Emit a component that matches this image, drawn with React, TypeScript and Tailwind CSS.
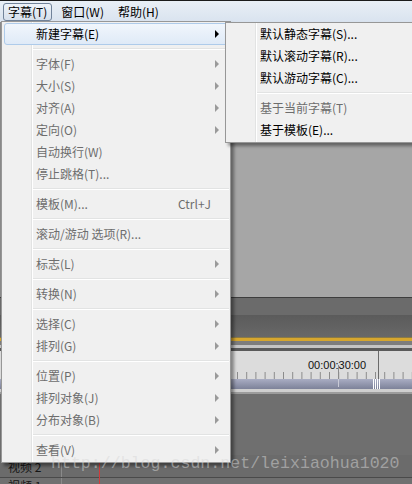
import React from "react";

type Item = { t: string; arrow?: boolean; active?: boolean; sc?: string; disabled?: boolean } | "sep";

const mainItems: Item[] = [
  { t: "新建字幕(E)", arrow: true, active: true },
  "sep",
  { t: "字体(F)", arrow: true, disabled: true },
  { t: "大小(S)", arrow: true, disabled: true },
  { t: "对齐(A)", arrow: true, disabled: true },
  { t: "定向(O)", arrow: true, disabled: true },
  { t: "自动换行(W)", disabled: true },
  { t: "停止跳格(T)...", disabled: true },
  "sep",
  { t: "模板(M)...", sc: "Ctrl+J", disabled: true },
  "sep",
  { t: "滚动/游动 选项(R)...", disabled: true },
  "sep",
  { t: "标志(L)", arrow: true, disabled: true },
  "sep",
  { t: "转换(N)", arrow: true, disabled: true },
  "sep",
  { t: "选择(C)", arrow: true, disabled: true },
  { t: "排列(G)", arrow: true, disabled: true },
  "sep",
  { t: "位置(P)", arrow: true, disabled: true },
  { t: "排列对象(J)", arrow: true, disabled: true },
  { t: "分布对象(B)", arrow: true, disabled: true },
  "sep",
  { t: "查看(V)", arrow: true, disabled: true },
];

const subItems: Item[] = [
  { t: "默认静态字幕(S)..." },
  { t: "默认滚动字幕(R)..." },
  { t: "默认游动字幕(C)..." },
  "sep",
  { t: "基于当前字幕(T)", disabled: true },
  { t: "基于模板(E)..." },
];

function MenuRows({ items }: { items: Item[] }) {
  return (
    <>
      {items.map((it, i) =>
        it === "sep" ? (
          <div key={i} className="h-[8px] pl-[31px] pr-[1px] pt-[3px]">
            <div className="h-[1px] bg-[#e2e3e3]" />
            <div className="h-[1px] bg-white" />
          </div>
        ) : (
          <div
            key={i}
            className={
              "relative mx-[2px] flex h-[22px] items-center rounded-[3px] border pl-[31px] pr-[8px] " +
              (it.active
                ? "border-[#aecbea] bg-gradient-to-b from-[#f1f6fc] to-[#dfeaf7]"
                : "border-transparent")
            }
          >
            <span
              className={
                "flex-1 whitespace-nowrap leading-[22px] " +
                (it.disabled ? "text-[#6d6d6d]" : "text-black")
              }
            >
              {it.t}
            </span>
            {it.sc && <span className="whitespace-nowrap text-[#6d6d6d]">{it.sc}</span>}
            <span className="flex w-[8px] justify-end">
              {it.arrow && (
                <span
                  className={
                    "h-0 w-0 border-y-[4px] border-l-[4px] border-y-transparent " +
                    (it.disabled ? "border-l-[#9a9a9a]" : "border-l-black")
                  }
                />
              )}
            </span>
          </div>
        )
      )}
    </>
  );
}

const ticks = Array.from({ length: 46 }, (_, k) => 237 + 9.2 * (k - 26));

export default function App() {
  return (
    <div className="relative flex h-[484px] w-[412px] flex-col overflow-hidden bg-[#6b6b6b] font-['Noto_Sans_CJK_SC','Microsoft_YaHei',sans-serif] text-[12px]">
      {/* Menu bar */}
      <div className="flex h-[22px] shrink-0 items-center gap-[4px] border-t border-[#1b1b1b] bg-gradient-to-b from-[#e9eff6] to-[#d9e3ef] pl-[3px]">
        <div className="flex h-[18px] items-center rounded-[3px] border border-[#71839a] bg-gradient-to-b from-[#eef3f9] to-[#d6e0ec] px-[4px] leading-none text-black">
          字幕(T)
        </div>
        <div className="flex h-[18px] items-center border border-transparent px-[4px] leading-none text-black">
          窗口(W)
        </div>
        <div className="flex h-[18px] items-center border border-transparent px-[4px] leading-none text-black">
          帮助(H)
        </div>
      </div>

      {/* upper workspace */}
      <div className="flex h-[275px] shrink-0">
        <div className="w-[231px] bg-[#8a8a8a]" />
        <div className="flex flex-1 flex-col">
          <div className="h-[121px] bg-[#d8d8d8]" />
          <div className="flex-1 bg-[#a6a6a6]" />
        </div>
      </div>
      <div className="h-[1px] shrink-0 bg-[#3d3d3d]" />
      <div className="h-[17px] shrink-0 bg-[#6b6b6b]" />
      <div className="h-[22px] shrink-0 bg-gradient-to-b from-[#5b5b5b] to-[#686868]" />
      <div className="h-[1px] shrink-0 bg-[#8b7a45]" />
      <div className="h-[3px] shrink-0 bg-[#d6a62e]" />
      <div className="h-[4px] shrink-0 bg-[#7d7d7d]" />
      <div className="h-[3px] shrink-0 bg-[#c4c4c4]" />
      <div className="h-[3px] shrink-0 bg-[#5a5a5a]" />

      {/* ruler */}
      <div className="relative h-[28px] shrink-0 bg-[#dcdcdc] pl-[308px] pt-[4px]">
        <span className="font-['Liberation_Sans',Arial,sans-serif] text-[11px] leading-[13px] text-[#111]">
          00:00:30:00
        </span>
        <svg className="absolute left-0 top-0" width="412" height="28">
          {ticks.map((x, i) => (
            <line key={i} x1={x + 0.5} x2={x + 0.5} y1={21} y2={28} stroke="#8c8c8c" strokeWidth={1} />
          ))}
          <line x1={338.5} x2={338.5} y1={14} y2={28} stroke="#8c8c8c" strokeWidth={1} />
          <line x1={378.5} x2={378.5} y1={0} y2={28} stroke="#6a6a6a" strokeWidth={1} />
        </svg>
      </div>
      <div className="relative h-[10px] shrink-0 bg-gradient-to-b from-[#a9adc3] to-[#7d8299]">
        <svg className="absolute left-0 top-0" width="412" height="10">
          <line x1={338.5} x2={338.5} y1={0} y2={8} stroke="#c8cad6" strokeWidth={1} />
          {[373, 375, 377, 379].map((x) => (
            <line key={x} x1={x + 0.5} x2={x + 0.5} y1={0} y2={10} stroke="#ffffff" strokeWidth={1} />
          ))}
        </svg>
      </div>
      <div className="h-[3px] shrink-0 bg-[#cfcfcf]" />
      <div className="h-[2px] shrink-0 bg-[#9c9c9c]" />

      {/* tracks */}
      <div className="relative flex flex-1 flex-col bg-[#6f6f6f]">
        <div className="flex-1" />
        <div className="flex h-[22px] shrink-0 bg-[#6b6b6b]">
          <div className="flex w-[62px] items-end border-r border-[#8a8a8a] pb-[3px] pl-[8px] leading-[14px] text-[#151515]">
            视频 2
          </div>
          <div className="flex-1" />
        </div>
        <div className="h-[1px] shrink-0 bg-[#4a4a4a]" />
        <div className="flex h-[6px] shrink-0 bg-[#707070]">
          <div className="w-[62px] border-r border-[#8a8a8a] pl-[8px] pt-[1px] leading-[14px] text-[#151515]">
            视频 1
          </div>
        </div>
        <div className="absolute bottom-0 left-[99px] top-[55px] w-[1px] bg-[#d23a3a]" />
      </div>

      {/* main dropdown menu */}
      <div className="absolute left-[1px] top-[21px] w-[230px] border border-[#979797] bg-[#f0f0f0] py-[1px] shadow-[3px_3px_3px_rgba(0,0,0,0.4)]">
        <div className="absolute bottom-0 left-[29px] top-0 flex">
          <div className="w-[1px] bg-[#e2e3e3]" />
          <div className="w-[1px] bg-white" />
        </div>
        <MenuRows items={mainItems} />
      </div>

      {/* submenu */}
      <div className="absolute left-[225px] top-[22px] w-[200px] border border-[#979797] bg-[#f0f0f0] pb-[1px] shadow-[3px_3px_3px_rgba(0,0,0,0.4)]">
        <div className="absolute bottom-0 left-[29px] top-0 flex">
          <div className="w-[1px] bg-[#e2e3e3]" />
          <div className="w-[1px] bg-white" />
        </div>
        <MenuRows items={subItems} />
      </div>

      {/* watermark */}
      <div className="pointer-events-none absolute left-[51px] top-[454px] whitespace-nowrap font-['Liberation_Mono',monospace] text-[16.6px] leading-[20px] text-[rgba(215,215,215,0.5)]">
        http://blog.csdn.net/leixiaohua1020
      </div>
    </div>
  );
}
